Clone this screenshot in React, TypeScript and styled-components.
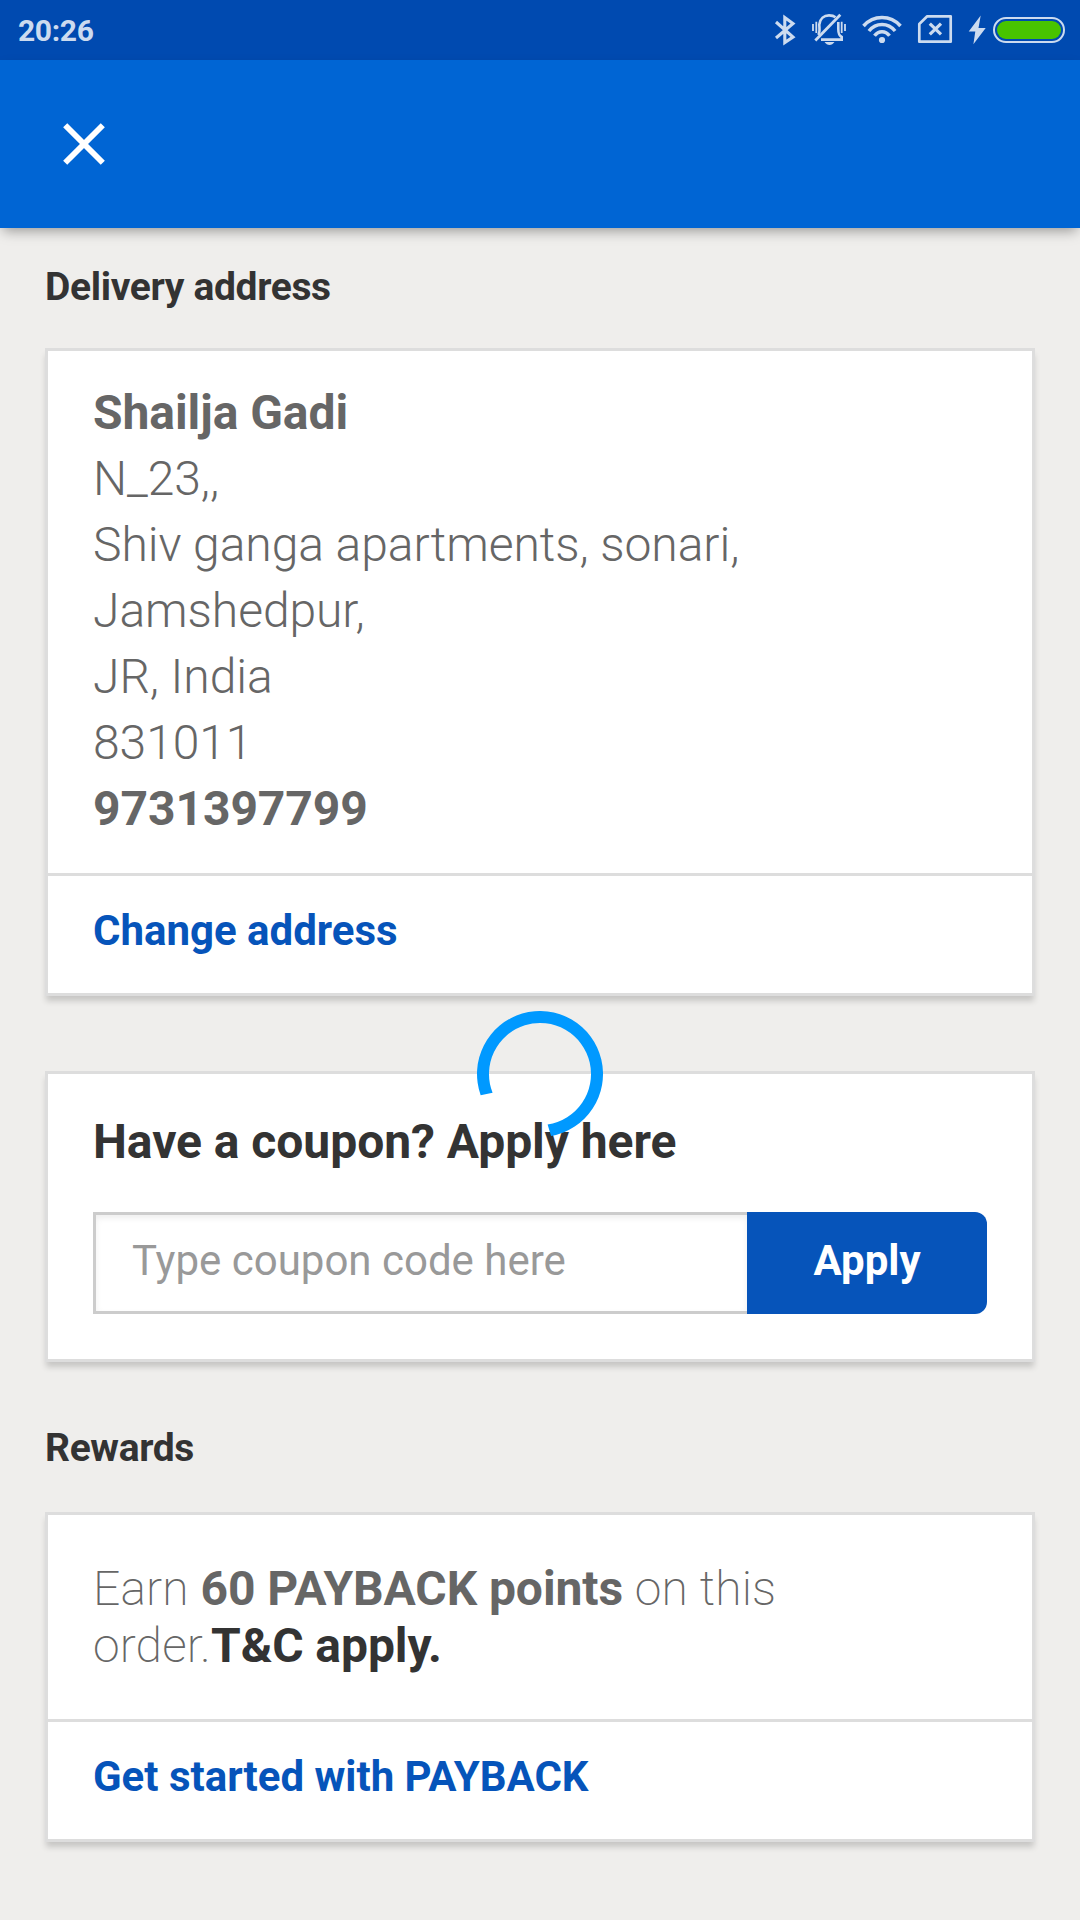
import React from 'react';
import styled, { createGlobalStyle } from 'styled-components';

const GlobalStyle = createGlobalStyle`
  *, *::before, *::after { box-sizing: border-box; }
  body {
    margin: 0;
    background: #efeeec;
    font-family: Roboto, "Liberation Sans", sans-serif;
    color: #333;
  }
`;

const Screen = styled.div`
  position: relative;
  width: 1080px;
  height: 1920px;
  display: flex;
  flex-direction: column;
  overflow: hidden;
  background: #efeeec;
`;

const StatusBar = styled.header`
  display: flex;
  align-items: center;
  justify-content: space-between;
  height: 60px;
  padding: 0 15px 0 18px;
  background: #004ab0;
  color: #ccdbef;
`;

const Clock = styled.time`
  font-size: 30px;
  line-height: 36px;
  font-weight: 700;
  letter-spacing: -0.35px;
  padding-top: 1px;
`;

const StatusIcons = styled.div`
  display: flex;
  height: 60px;
`;

const Icon = styled.svg`
  display: block;
  flex: none;
`;

const AppBar = styled.nav`
  display: flex;
  align-items: center;
  height: 168px;
  padding-left: 48px;
  background: #0065d4;
  box-shadow: 0 6px 12px -3px rgba(0, 0, 0, 0.36);
`;

const CloseButton = styled.button`
  display: flex;
  padding: 0;
  border: 0;
  background: none;
  color: #fff;
`;

const Content = styled.main`
  display: flex;
  flex-direction: column;
  padding: 0 45px;
`;

const SectionTitle = styled.h2<{ $top: number; $bottom: number }>`
  margin: ${(p) => p.$top}px 0 ${(p) => p.$bottom}px;
  font-size: 39px;
  line-height: 46px;
  font-weight: 700;
  letter-spacing: -0.35px;
`;

const Card = styled.section<{ $height: number }>`
  display: flex;
  flex-direction: column;
  height: ${(p) => p.$height}px;
  background: #fff;
  border: 3px solid #ddd;
  box-shadow: 0 6px 6px -1px rgba(0, 0, 0, 0.17);
`;

const Address = styled.address`
  flex: 1;
  padding: 29px 45px 0;
  font-size: 48px;
  line-height: 66px;
  letter-spacing: -0.06px;
  font-style: normal;
  font-weight: 300;
  color: #666;
`;

const Line = styled.div<{ $bold?: boolean }>`
  font-weight: ${(p) => (p.$bold ? 700 : 'inherit')};
  white-space: nowrap;
`;

const LinkRow = styled.a`
  height: 120px;
  padding: 30px 45px 0;
  border-top: 3px solid #ddd;
  font-size: 42px;
  line-height: 50px;
  font-weight: 700;
  letter-spacing: -0.01px;
  color: #0654ba;
`;

const CouponCard = styled(Card)`
  margin-top: 75px;
  padding: 40px 45px 0;
`;

const CouponTitle = styled.h3`
  margin: 0 0 42px;
  font-size: 48px;
  line-height: 56px;
  font-weight: 700;
  letter-spacing: -0.05px;
`;

const CouponForm = styled.div`
  display: flex;
  height: 102px;
`;

const CouponInput = styled.input`
  width: 654px;
  padding: 0 0 5px 36px;
  border: 3px solid #ccc;
  border-right: 0;
  border-radius: 0;
  background: #fff;
  box-shadow: inset 0 3px 6px rgba(0, 0, 0, 0.07);
  font: 400 42px Roboto, "Liberation Sans", sans-serif;
  outline: none;
  &::placeholder { color: #999; opacity: 1; }
`;

const ApplyButton = styled.button`
  width: 240px;
  padding: 0 0 5px;
  border: 0;
  border-radius: 0 12px 12px 0;
  background: #0654ba;
  color: #fff;
  font: 700 42px Roboto, "Liberation Sans", sans-serif;
`;

const RewardText = styled.p`
  flex: 1;
  margin: 0;
  padding: 45px 45px 0;
  font-size: 48px;
  line-height: 57px;
  font-weight: 200;
  letter-spacing: 0.15px;
  color: #666;
`;

const Strong = styled.strong<{ $dark?: boolean }>`
  font-weight: 700;
  letter-spacing: -0.08px;
  color: ${(p) => (p.$dark ? '#333' : 'inherit')};
`;

const Spinner = styled.svg`
  position: absolute;
  left: 477px;
  top: 1011px;
`;

const Bluetooth = () => (
  <Icon width="40" height="60" viewBox="765 0 40 60" fill="none" stroke="currentColor" strokeWidth="3.1">
    <path d="M776 22 L793 37 L784.8 42.5 V17.5 L793 23.5 L776 38" />
  </Icon>
);

const MutedBell = () => (
  <Icon width="52" height="60" viewBox="805 0 52 60" fill="none" stroke="currentColor" strokeWidth="2.6">
    <path d="M815.3 40.5 L840.3 14.8" strokeWidth="2.8" />
    <path d="M818.3 35 C820.3 32 819.3 28 819.3 24.5 C820 18.5 824 15.4 829 15.4 C832 15.4 834 16 835.5 17.3" />
    <path d="M838.3 22 V29 C838.3 34 839 35.5 841.7 37 V39.6 H821" />
    <path d="M824.5 42 H834.5 C833 44 831.5 45 829.5 45 C827.5 45 826 44 824.5 42 Z" fill="currentColor" stroke="none" />
    <path d="M813 24 V31 M816.3 21.7 V33 M841.7 21.7 V33 M845 24 V31" strokeWidth="1.8" />
  </Icon>
);

const Wifi = () => (
  <Icon width="56" height="60" viewBox="857 0 56 60" fill="none" stroke="currentColor" strokeWidth="3.5">
    <path d="M863.5 26 C873.5 14.7 890.5 14.7 900.5 26" />
    <path d="M868.9 31 C876 22.3 888 22.3 895.1 31" />
    <path d="M874.5 35.7 C878.5 30.3 885.5 30.3 889.5 35.7" />
    <circle cx="882" cy="40" r="3.1" fill="currentColor" stroke="none" />
  </Icon>
);

const NoSim = () => (
  <Icon width="50" height="60" viewBox="913 0 50 60" fill="none" stroke="currentColor" strokeWidth="2.7">
    <path d="M927.2 16.3 H950.7 V41.7 H919.3 V24 Z" strokeLinejoin="round" />
    <path d="M929.8 23.6 L941 34.4 M941 23.6 L929.8 34.4" strokeWidth="3.2" />
  </Icon>
);

const Charging = () => (
  <Icon width="26" height="60" viewBox="963 0 26 60">
    <path d="M980.7 15.5 L968.7 31.6 H975.3 L973.4 44.3 L985.7 28 H978.5 Z" fill="currentColor" />
  </Icon>
);

const Battery = () => (
  <Icon width="76" height="60" viewBox="989 0 76 60">
    <rect x="994" y="18" width="70" height="24" rx="12" fill="none" stroke="currentColor" strokeWidth="2" />
    <rect x="997" y="21" width="64" height="18" rx="9" fill="#48c400" />
  </Icon>
);

export default function App() {
  return (
    <>
      <GlobalStyle />
      <Screen>
        <StatusBar>
          <Clock>20:26</Clock>
          <StatusIcons>
            <Bluetooth />
            <MutedBell />
            <Wifi />
            <NoSim />
            <Charging />
            <Battery />
          </StatusIcons>
        </StatusBar>
        <AppBar>
          <CloseButton aria-label="Close">
            <Icon width="72" height="72" viewBox="0 0 72 72" stroke="currentColor" strokeWidth="5.8">
              <path d="M17.2 17.2 L54.8 54.8 M54.8 17.2 L17.2 54.8" />
            </Icon>
          </CloseButton>
        </AppBar>
        <Content>
          <SectionTitle $top={36} $bottom={38}>Delivery address</SectionTitle>
          <Card $height={648}>
            <Address>
              <Line $bold>Shailja Gadi</Line>
              <Line>N_23,,</Line>
              <Line>Shiv ganga apartments, sonari,</Line>
              <Line>Jamshedpur,</Line>
              <Line>JR, India</Line>
              <Line>831011</Line>
              <Line $bold>9731397799</Line>
            </Address>
            <LinkRow>Change address</LinkRow>
          </Card>
          <CouponCard $height={291}>
            <CouponTitle>Have a coupon? Apply here</CouponTitle>
            <CouponForm>
              <CouponInput placeholder="Type coupon code here" />
              <ApplyButton>Apply</ApplyButton>
            </CouponForm>
          </CouponCard>
          <SectionTitle $top={63} $bottom={41}>Rewards</SectionTitle>
          <Card $height={330}>
            <RewardText>
              Earn <Strong>60 PAYBACK points</Strong> on this
              <br />
              order.<Strong $dark>T&amp;C apply.</Strong>
            </RewardText>
            <LinkRow>Get started with PAYBACK</LinkRow>
          </Card>
        </Content>
        <Spinner width="126" height="126" viewBox="0 0 126 126">
          <path d="M3.67 84.17 A63 63 0 1 1 74.06 125.02 L70.61 113.43 A51 51 0 1 0 15.58 81.77 Z" fill="#0099ff" />
        </Spinner>
      </Screen>
    </>
  );
}
